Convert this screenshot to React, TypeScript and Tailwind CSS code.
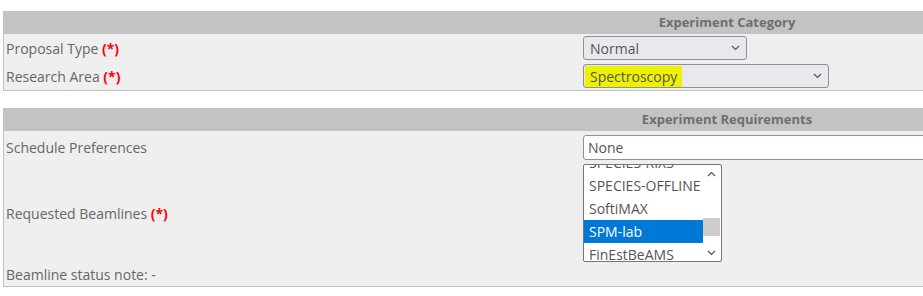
import React from 'react';

const font = { fontFamily: '"Open Sans", "Noto Sans", Arial, sans-serif' };

const Req = () => <span className="font-bold text-[#ff0000]">(*)</span>;

const Chevron = ({ up }: { up?: boolean }) => (
  <svg width="9" height="6" viewBox="0 0 9 6" className="shrink-0">
    <path d={up ? 'M1 5 L4.5 1.5 L8 5' : 'M1 1 L4.5 4.5 L8 1'} fill="none" stroke="#555" strokeWidth="1.2" />
  </svg>
);

const Select = ({ value, width, highlight }: { value: string; width: string; highlight?: boolean }) => (
  <div className={`${width} h-[24px] flex items-center justify-between border border-[#8f8f9d] rounded-[3px] bg-[#e9e9ed] pl-[1px] pr-[6px]`}>
    <span className={`px-[5px] leading-[21px] ${highlight ? 'bg-[#eef200]' : ''} text-[#555]`}>{value}</span>
    <Chevron />
  </div>
);

const SectionHeader = ({ title }: { title: string }) => (
  <div className="flex h-[23px] bg-[#c3c3c3]">
    <div className="w-[578px] shrink-0" />
    <div className="w-[290px] shrink-0 text-center font-bold text-[13px] leading-[23px] text-[#6e6e6e]">{title}</div>
  </div>
);

const beamlines = ['SPECIES-RIXS', 'SPECIES-OFFLINE', 'SoftiMAX', 'SPM-lab', 'FinEstBeAMS'];

const Listbox = () => (
  <div className="w-[139px] h-[98px] border border-[#767676] rounded-[2px] bg-white flex overflow-hidden">
    <div className="w-[119px] overflow-hidden">
      <div className="-mt-[14px]">
        {beamlines.map((b) => (
          <div
            key={b}
            className={`h-[23px] leading-[23px] pl-[5px] whitespace-nowrap ${b === 'SPM-lab' ? 'bg-[#0078d7] text-white' : 'text-[#555]'}`}
          >
            {b}
          </div>
        ))}
      </div>
    </div>
    <div className="w-[17px] flex flex-col items-center bg-white">
      <div className="h-[17px] flex items-center justify-center"><Chevron up /></div>
      <div className="flex-1 w-full flex flex-col">
        <div className="h-[36px]" />
        <div className="h-[18px] w-full bg-[#cdcdcd]" />
      </div>
      <div className="h-[17px] flex items-center justify-center"><Chevron /></div>
    </div>
  </div>
);

export default function App() {
  return (
    <div className="w-[923px] h-[296px] bg-white overflow-hidden pt-[11px] pl-[3px] text-[14px] text-[#666]" style={font}>
      <div className="w-[1000px] border-l border-b border-[#c0c0c0] bg-[#efefef]">
        <SectionHeader title="Experiment Category" />
        <div className="flex items-center h-[28px]">
          <div className="w-[579px] shrink-0 pl-[2px]">Proposal Type <Req /></div>
          <Select value="Normal" width="w-[164px]" />
        </div>
        <div className="flex items-center h-[28px]">
          <div className="w-[579px] shrink-0 pl-[2px]">Research Area <Req /></div>
          <Select value="Spectroscopy" width="w-[246px]" highlight />
        </div>
      </div>

      <div className="mt-[17px] w-[1000px] border-l border-b border-[#c0c0c0] bg-[#efefef]">
        <SectionHeader title="Experiment Requirements" />
        <div className="flex items-center h-[33px]">
          <div className="w-[579px] shrink-0 pl-[2px]">Schedule Preferences</div>
          <div className="w-[400px] h-[25px] border border-[#8f8f9d] rounded-l-[3px] bg-white pl-[4px] leading-[23px] text-[#555]">None</div>
        </div>
        <div className="flex items-center h-[98px]">
          <div className="w-[579px] shrink-0 pl-[2px]">Requested Beamlines <Req /></div>
          <Listbox />
        </div>
        <div className="flex items-center h-[24px]">
          <div className="pl-[2px]">Beamline status note: -</div>
        </div>
      </div>
    </div>
  );
}
